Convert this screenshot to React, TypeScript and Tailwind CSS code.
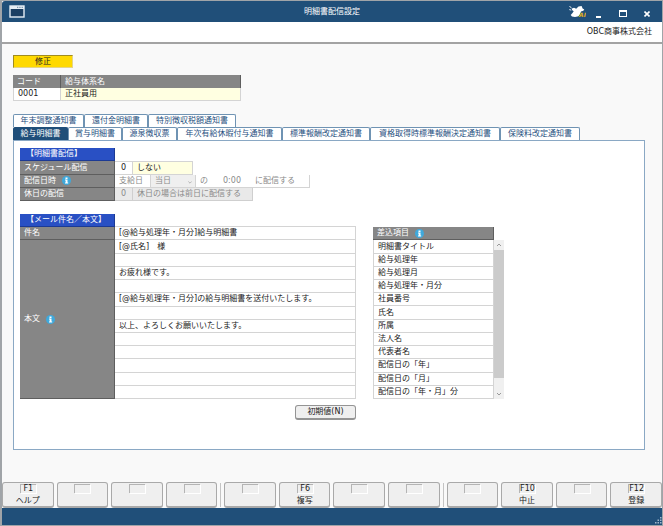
import type { ReactNode } from 'react';

const upperTabs = [
  { label: '年末調整通知書', width: 'w-[71px]' },
  { label: '還付金明細書', width: 'w-16' },
  { label: '特別徴収税額通知書', width: 'w-[88px]' },
];

const lowerTabs = [
  { label: '給与明細書', width: 'w-[55px]' },
  { label: '賞与明細書', width: 'w-[54px]' },
  { label: '源泉徴収票', width: 'w-[55px]' },
  { label: '年次有給休暇付与通知書', width: 'w-[105px]' },
  { label: '標準報酬改定通知書', width: 'w-[88px]' },
  { label: '資格取得時標準報酬決定通知書', width: 'w-[130px]' },
  { label: '保険料改定通知書', width: 'w-20' },
];

const bodyLines = [
  '[@氏名]　様',
  '',
  'お疲れ様です。',
  '',
  '[@給与処理年・月分]の給与明細書を送付いたします。',
  '',
  '以上、よろしくお願いいたします。',
  '',
  '',
  '',
  '',
  '',
];

const mergeFields = [
  '明細書タイトル',
  '給与処理年',
  '給与処理月',
  '給与処理年・月分',
  '社員番号',
  '氏名',
  '所属',
  '法人名',
  '代表者名',
  '配信日の「年」',
  '配信日の「月」',
  '配信日の「年・月」分',
];

const functionKeys = [
  [
    { key: 'F1', label: 'ヘルプ' },
    { key: '', label: '' },
    { key: '', label: '' },
    { key: '', label: '' },
  ],
  [
    { key: '', label: '' },
    { key: 'F6', label: '複写' },
    { key: '', label: '' },
    { key: '', label: '' },
  ],
  [
    { key: '', label: '' },
    { key: 'F10', label: '中止' },
    { key: '', label: '' },
    { key: 'F12', label: '登録' },
  ],
];

function InfoIcon() {
  return (
    <svg viewBox="0 0 18 18" className="ml-1.5 size-[9px] shrink-0" role="img" aria-label="情報">
      <circle cx="9" cy="9" r="9" fill="#3fa9dc" />
      <rect x="7" y="3" width="4" height="3" fill="#fff" />
      <path d="M6 7.2h5v6h1.4v1.9H6v-1.9h1.300V9.100H6z" fill="#fff" />
    </svg>
  );
}

function RowHeading({ children }: { children: ReactNode }) {
  return (
    <div className="flex items-center border-r border-b border-[#5e5e5e] bg-[#868686] pl-1 text-white">
      {children}
    </div>
  );
}

function SectionTitle({ children }: { children: ReactNode }) {
  return (
    <h2 className="flex w-[95px] items-center border-r border-b border-[#1c3a94] bg-[#2950c4] pl-1.5 text-white">
      {children}
    </h2>
  );
}

function Tab({ label, width, active = false }: { label: string; width: string; active?: boolean }) {
  const tone = active
    ? 'border-[#1f4e79] bg-[#1f4e79] text-white'
    : 'border-[#6f93b3] bg-white text-[#1f5080]';
  return (
    <button
      type="button"
      role="tab"
      aria-selected={active}
      className={`${width} ${tone} flex h-[13px] items-center justify-center rounded-t-[2px] border border-b-0 whitespace-nowrap`}
    >
      {label}
    </button>
  );
}

function Separator() {
  return <div className="my-px w-px bg-[#c4c4c4]" />;
}

function FunctionKey({ name, label }: { name: string; label: string }) {
  return (
    <button
      type="button"
      aria-label={label || '未割り当て'}
      className="flex h-[26px] min-w-0 flex-1 flex-col items-center rounded-[3px] border border-b-2 border-[#a9a9a9] bg-[#efefef] pt-px"
    >
      <span className="h-[9px] w-4 border-t border-l border-[#b4b4b4] text-center leading-[8px] shadow-[1px_1px_0_#fff]">
        {name}
      </span>
      <span className="pt-0.5 leading-[11px]">{label}</span>
    </button>
  );
}

export default function App() {
  return (
    <div className="flex min-h-screen flex-col border-t border-r border-b border-l-2 border-[#a0a4a8] bg-[#f9f9f9] font-['DejaVu_Sans','Noto_Sans_CJK_JP',sans-serif] text-[8px] leading-[12px] text-[#222]">
      <header>
        <div className="grid h-[21px] grid-cols-[1fr_auto_1fr] items-center rounded-tl-[3px] bg-[#204f79] text-white">
          <svg viewBox="0 0 16 13" className="ml-[7px] h-[13px] w-4" aria-hidden="true">
            <rect x="1" y="1" width="14" height="11" fill="#1b3f63" stroke="#e6eef5" strokeWidth="1.4" />
            <path d="M1 1h14v3H1z" fill="#e6eef5" />
            <path d="M8 2.3h1.3M10.3 2.3h1.3M12.6 2.3h1.3" stroke="#5f7f9d" />
          </svg>
          <h1>明細書配信設定</h1>
          <div className="flex items-center justify-end">
            <svg viewBox="0 0 17 13" className="mr-2 h-[13px] w-[17px]" aria-hidden="true">
              <path
                d="M0.5 1l2.2 2.4M0.3 4.6l2 .5"
                stroke="#e6eef5"
                strokeWidth="1"
                fill="none"
              />
              <path
                d="M3 3.400l2-.6 2.200 1L9.500 1.600 12.600 1l1 2.400 1.700 1-1 1.300-2.300.7-1 2.900-1.500 2-3.500.8-3-.6-1.300-1.500L3.500 8l1.200-1.800L3 5z"
                fill="#fff"
              />
              <text x="10" y="12" fontSize="6" fontWeight="bold" fontStyle="italic" fill="#e0b020">
                AI
              </text>
            </svg>
            <button type="button" aria-label="最小化" className="mr-[17px] flex h-3 w-2 items-end justify-center">
              <span className="h-0.5 w-[5px] bg-white" />
            </button>
            <button type="button" aria-label="最大化" className="mr-[17px] flex h-3 w-2 items-center">
              <span className="mt-1 h-[7px] w-2 border border-t-2 border-white" />
            </button>
            <button type="button" aria-label="閉じる" className="mr-3 pt-1">
              <svg viewBox="0 0 6 6" className="size-1.5" aria-hidden="true">
                <path d="M.5.5l5 5M5.500.500l-5 5" stroke="#fff" strokeWidth="1.600" />
              </svg>
            </button>
          </div>
        </div>
        <div className="flex h-[22px] items-center justify-end border-b-2 border-[#a3a3a3] bg-white pr-[10px]">
          OBC商事株式会社
        </div>
      </header>

      <main className="flex flex-1 flex-col pt-[11px] pr-[17px] pb-8 pl-[11px]">
        <div className="flex h-[13px] w-[60px] items-center justify-center border border-t-[#a08c20] border-r-[#e4d488] border-b-[#e4d488] border-l-[#a08c20] bg-[#ffd900]">
          修正
        </div>

        <table className="mt-[7px] w-[228px] table-fixed border-separate border-spacing-0 text-left">
          <thead>
            <tr className="h-[13px] bg-[#868686] leading-[12px] text-white">
              <th className="w-12 border-r border-[#5e5e5e] p-0 pl-1 font-normal">コード</th>
              <th className="border-r border-[#5e5e5e] p-0 pl-1 font-normal">給与体系名</th>
            </tr>
          </thead>
          <tbody>
            <tr className="h-[13px] leading-[12px]">
              <td className="border-x border-b border-[#d4d4d4] bg-white p-0 pl-1">0001</td>
              <td className="border-r border-b border-[#d4d4d4] bg-[#ffffe1] p-0 pl-1">正社員用</td>
            </tr>
          </tbody>
        </table>

        <div role="tablist" aria-label="明細書の種類" className="mt-[13px]">
          <div className="flex">
            {upperTabs.map((tab) => (
              <Tab key={tab.label} label={tab.label} width={tab.width} />
            ))}
          </div>
          <div className="flex">
            {lowerTabs.map((tab, index) => (
              <Tab key={tab.label} label={tab.label} width={tab.width} active={index === 0} />
            ))}
          </div>
        </div>

        <section role="tabpanel" className="flex-1 border border-[#8aa8c4] bg-white pt-[7px] pl-1.5">
          <div className="grid h-[53px] grid-rows-4">
            <SectionTitle>【明細書配信】</SectionTitle>
            <div className="grid grid-cols-[95px_1fr]">
              <RowHeading>
                <label htmlFor="schedule">スケジュール配信</label>
              </RowHeading>
              <div className="flex">
                <input
                  id="schedule"
                  defaultValue="0"
                  className="w-[18px] border border-l-0 border-[#d4d4d4] text-center"
                />
                <div className="flex w-[60px] items-center border-y border-r border-[#d4d4d4] bg-[#ffffe1] pl-1">
                  しない
                </div>
              </div>
            </div>
            <div className="grid grid-cols-[95px_1fr]">
              <RowHeading>
                配信日時
                <InfoIcon />
              </RowHeading>
              <div className="flex w-[195px] items-center border-r border-b border-[#d4d4d4] text-[#8a8a8a]">
                <span className="w-[35px] pl-1">支給日</span>
                <div className="relative h-full w-[46px]">
                  <select
                    disabled
                    aria-label="配信日"
                    defaultValue="当日"
                    className="block h-full w-full appearance-none border-x border-[#d4d4d4] bg-[#efefef] pl-1 opacity-100"
                  >
                    <option>当日</option>
                  </select>
                  <svg viewBox="0 0 6 4" className="absolute top-1.5 right-1 h-[3px] w-1" aria-hidden="true">
                    <path d="M.5.5L3 3 5.500.500" stroke="#999" fill="none" />
                  </svg>
                </div>
                <span className="w-[27px] pl-1">の</span>
                <input
                  disabled
                  aria-label="配信時刻"
                  defaultValue="0:00"
                  className="w-8 bg-transparent"
                />
                <span className="whitespace-nowrap">に配信する</span>
              </div>
            </div>
            <div className="grid grid-cols-[95px_1fr]">
              <RowHeading>
                <label htmlFor="holiday">休日の配信</label>
              </RowHeading>
              <div className="flex text-[#8a8a8a]">
                <input
                  id="holiday"
                  disabled
                  defaultValue="0"
                  className="w-[18px] border-r border-b border-[#cfcfcf] bg-[#e9e9e9] text-center"
                />
                <div className="flex w-[120px] items-center border-r border-b border-[#cfcfcf] bg-[#e9e9e9] pl-1">
                  休日の場合は前日に配信する
                </div>
              </div>
            </div>
          </div>

          <div className="mt-[13px] flex h-[185px] gap-[17px]">
            <div className="grid w-[336px] grid-cols-[95px_1fr] grid-rows-14">
              <SectionTitle>【メール件名／本文】</SectionTitle>
              <div className="border-b border-[#d4d4d4]" />
              <RowHeading>
                <label htmlFor="subject">件名</label>
              </RowHeading>
              <input
                id="subject"
                defaultValue="[@給与処理年・月分]給与明細書"
                className="min-w-0 border-r border-b border-[#d4d4d4] pl-1"
              />
              <div className="row-span-12 grid">
                <RowHeading>
                  本文
                  <InfoIcon />
                </RowHeading>
              </div>
              {bodyLines.map((line, index) => (
                <input
                  key={index}
                  aria-label={`本文 ${index + 1}行目`}
                  defaultValue={line}
                  className="col-start-2 min-w-0 border-r border-b border-[#d4d4d4] pl-1"
                />
              ))}
            </div>

            <div className="grid w-[131px] grid-cols-[121px_10px] grid-rows-14">
              <div className="col-start-1 row-start-2 grid">
                <RowHeading>
                  差込項目
                  <InfoIcon />
                </RowHeading>
              </div>
              <ul className="col-start-1 row-span-12 row-start-3 grid grid-rows-12 border-l border-[#d4d4d4]">
                {mergeFields.map((field) => (
                  <li key={field} className="flex items-center border-r border-b border-[#d4d4d4] pl-1">
                    {field}
                  </li>
                ))}
              </ul>
              <div className="col-start-2 row-span-12 row-start-3 flex flex-col items-center bg-[#f0f0f0]">
                <svg viewBox="0 0 6 10" className="h-[10px] w-1.5" aria-hidden="true">
                  <path d="M1 6l2-2 2 2" stroke="#999" fill="none" />
                </svg>
                <div className="h-[128px] w-full bg-[#cbcbcb]" />
                <svg viewBox="0 0 6 10" className="mt-auto h-[10px] w-1.5" aria-hidden="true">
                  <path d="M1 4l2 2 2-2" stroke="#999" fill="none" />
                </svg>
              </div>
            </div>
          </div>

          <div className="mt-1.5 flex w-[336px] justify-end">
            <button
              type="button"
              className="flex h-[15px] w-[61px] items-center justify-center rounded-[3px] border border-b-2 border-[#949494] bg-[#efefef]"
            >
              初期値(N)
            </button>
          </div>
        </section>
      </main>

      <footer>
        <div className="flex gap-[3px]">
          {functionKeys.map((group, groupIndex) => (
            <div key={groupIndex} className="contents">
              {groupIndex > 0 && <Separator />}
              {group.map((item, index) => (
                <FunctionKey key={index} name={item.key} label={item.label} />
              ))}
            </div>
          ))}
        </div>
        <div className="flex h-[17px] items-end justify-end bg-[#204f79]">
          <svg viewBox="0 0 8 8" className="size-2" aria-hidden="true">
            <path
              d="M6 0h1.500v1.500H6zM3.500 2.500H5V4H3.500zM6 2.500h1.500V4H6zM1 5h1.500v1.500H1zM3.500 5H5v1.500H3.500zM6 5h1.500v1.500H6z"
              fill="#9fb6cb"
            />
          </svg>
        </div>
      </footer>
    </div>
  );
}
